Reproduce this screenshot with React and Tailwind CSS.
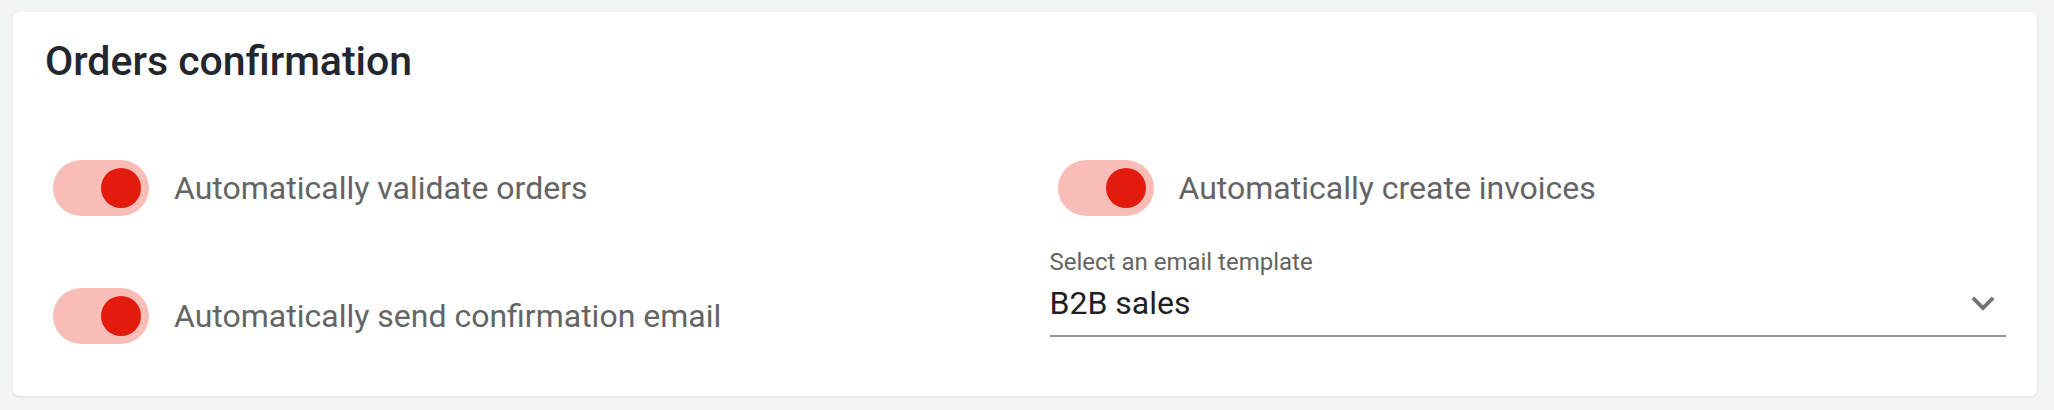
import React, { useState } from "react";

function Toggle({ label, defaultOn = true }) {
  const [on, setOn] = useState(defaultOn);
  return (
    <label className="flex items-center ml-2 cursor-pointer select-none">
      <button
        type="button"
        onClick={() => setOn(!on)}
        className={`relative flex items-center w-[96px] h-[56px] rounded-full px-[8px] ${
          on ? "bg-[#f9bdb8] justify-end" : "bg-[#d6d6d6] justify-start"
        }`}
      >
        <span
          className={`block w-[40px] h-[40px] rounded-full ${
            on ? "bg-[#e31b0c]" : "bg-white"
          }`}
        />
      </button>
      <span className="ml-[25px] text-[32px] leading-[40px] text-[#646464]">
        {label}
      </span>
    </label>
  );
}

export default function App() {
  return (
    <div
      className="w-full h-[410px] bg-[#f3f4f4] pt-[12px] pl-[13px] pr-[17px]"
      style={{ fontFamily: "Roboto, 'Noto Sans', sans-serif" }}
    >
      <div className="bg-white rounded-[7px] shadow-[0_1px_3px_rgba(0,0,0,0.10)] pt-[24px] pb-[52px] pl-8 pr-[31px]">
        {/* Card title */}
        <h2 className="text-[41px] leading-[50px] font-medium text-[#23262d]">
          Orders confirmation
        </h2>

        <div className="grid grid-cols-2 gap-x-[48px] gap-y-[32px] items-start mt-[74px]">
          <Toggle label="Automatically validate orders" />
          <Toggle label="Automatically create invoices" />

          <div className="mt-[40px]">
            <Toggle label="Automatically send confirmation email" />
          </div>

          {/* Email template select */}
          <div>
            <div className="text-[24px] leading-[28px] text-[#646464]">
              Select an email template
            </div>
            <div className="flex items-center justify-between mt-[4px] pb-[9px] border-b-2 border-[#969696] cursor-pointer">
              <span className="text-[32px] leading-[40px] text-[#1f1f1f]">
                B2B sales
              </span>
              <svg width="46" height="46" viewBox="0 0 24 24" fill="#757575">
                <path d="M16.59 8.59 12 13.17 7.41 8.59 6 10l6 6 6-6z" />
              </svg>
            </div>
          </div>
        </div>
      </div>
    </div>
  );
}
